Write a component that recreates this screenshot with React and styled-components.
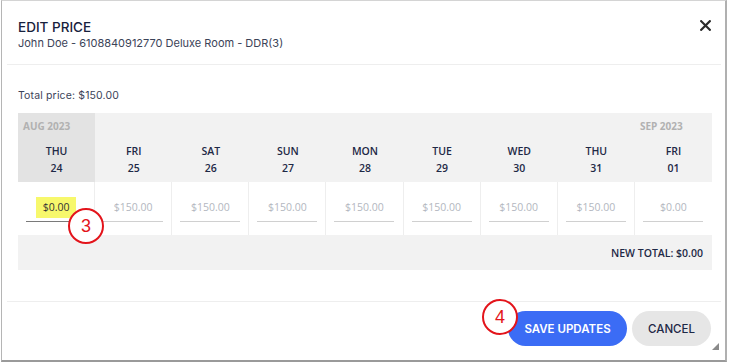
import React from 'react';
import styled, { createGlobalStyle } from 'styled-components';

const GlobalStyle = createGlobalStyle`
    html, body {
        margin: 0;
        padding: 0;
        background: #fff;
    }
    body {
        font-family: "Open Sans", "Liberation Sans", sans-serif;
    }
`;

const days = [
    { month: 'AUG 2023', day: 'THU', num: '24', value: '$0.00', active: true },
    { day: 'FRI', num: '25', value: '$150.00' },
    { day: 'SAT', num: '26', value: '$150.00' },
    { day: 'SUN', num: '27', value: '$150.00' },
    { day: 'MON', num: '28', value: '$150.00' },
    { day: 'TUE', num: '29', value: '$150.00' },
    { day: 'WED', num: '30', value: '$150.00' },
    { day: 'THU', num: '31', value: '$150.00' },
    { month: 'SEP 2023', day: 'FRI', num: '01', value: '$0.00' },
];

const App = () => {
    return (
        <>
            <GlobalStyle />
            <Dialog>
                <Header>
                    <div>
                        <Title>EDIT PRICE</Title>
                        <Subtitle>John Doe - 6108840912770 Deluxe Room - DDR(3)</Subtitle>
                    </div>
                    <CloseBtn aria-label="close">
                        <svg width="11" height="11" viewBox="0 0 11 11">
                            <path d="M1.2 1.2 L9.8 9.8 M9.8 1.2 L1.2 9.8" stroke="#2b2b2b" strokeWidth="2.2" strokeLinecap="square" />
                        </svg>
                    </CloseBtn>
                </Header>
                <Divider />
                <Body>
                    <TotalText>Total price: $150.00</TotalText>
                    <PriceTable>
                        {days.map((d, i) => (
                            <HeadCell key={'h' + i} active={d.active}>
                                <MonthLabel>{d.month || ''}</MonthLabel>
                                <DayLabel>{d.day}</DayLabel>
                                <DayLabel>{d.num}</DayLabel>
                            </HeadCell>
                        ))}
                        {days.map((d, i) => (
                            <ValueCell key={'v' + i} last={i === days.length - 1}>
                                <PriceInput active={d.active}>
                                    {d.active ? <Highlight>{d.value}</Highlight> : d.value}
                                </PriceInput>
                                {d.active && <Marker style={{ left: 50, top: 26 }}>3</Marker>}
                            </ValueCell>
                        ))}
                        <TotalRow>NEW TOTAL: $0.00</TotalRow>
                    </PriceTable>
                </Body>
                <Divider />
                <Footer>
                    <ButtonWrap>
                        <Marker style={{ left: -26, top: -12 }}>4</Marker>
                        <SaveBtn>SAVE UPDATES</SaveBtn>
                    </ButtonWrap>
                    <CancelBtn>CANCEL</CancelBtn>
                    <Grip>
                        <svg width="7" height="7" viewBox="0 0 7 7">
                            <path d="M7 0 L7 7 L0 7 Z" fill="#8a8a8a" />
                        </svg>
                    </Grip>
                </Footer>
            </Dialog>
        </>
    );
};

export default App;

const Dialog = styled.div`
    position: relative;
    box-sizing: border-box;
    width: 726px;
    height: 362px;
    margin-left: 1px;
    background: #fff;
    border: 1px solid #d4d4d4;
    border-left-color: #b5b5b5;
    border-bottom: 2px solid #9a9a9a;
    border-right: 2px solid #b0b0b0;
    display: flex;
    flex-direction: column;
`;

const Header = styled.div`
    height: 63px;
    padding: 17px 14px 0 16px;
    box-sizing: border-box;
    display: flex;
    justify-content: space-between;
    align-items: flex-start;
    font-family: "Inter", "Liberation Sans", sans-serif;
`;

const Title = styled.div`
    font-size: 13.5px;
    line-height: 18px;
    font-weight: 500;
    color: #17213d;
`;

const Subtitle = styled.div`
    font-size: 11px;
    line-height: 14px;
    color: #3b4358;
`;

const CloseBtn = styled.button`
    border: 0;
    background: none;
    padding: 0;
    margin-top: 2px;
    width: 11px;
    height: 11px;
    display: flex;
    cursor: pointer;
`;

const Divider = styled.div`
    height: 1px;
    margin: 0 4px 0 5px;
    background: #eeeeee;
`;

const Body = styled.div`
    padding: 24px 14px 0 16px;
    height: 236px;
    box-sizing: border-box;
    font-family: "Inter", "Liberation Sans", sans-serif;
`;

const TotalText = styled.div`
    font-size: 10.5px;
    line-height: 14px;
    color: #3b4358;
    margin-bottom: 10px;
    letter-spacing: 0.15px;
`;

const PriceTable = styled.div`
    display: grid;
    grid-template-columns: repeat(9, minmax(0, 1fr));
    width: 694px;
    background: #f2f2f2;
    font-family: "Open Sans", "Liberation Sans", sans-serif;
`;

const HeadCell = styled.div`
    height: 69px;
    box-sizing: border-box;
    padding: 6px 0 0;
    background: ${p => (p.active ? '#e3e3e3' : '#f2f2f2')};
    display: flex;
    flex-direction: column;
    align-items: center;
`;

const MonthLabel = styled.div`
    align-self: stretch;
    padding-left: 5px;
    height: 14px;
    line-height: 14px;
    font-size: 10px;
    font-weight: 700;
    color: #b1b1b1;
    margin-bottom: 10px;
    white-space: nowrap;
`;

const DayLabel = styled.div`
    font-size: 10.5px;
    line-height: 17px;
    font-weight: 600;
    color: #1e2946;
`;

const ValueCell = styled.div`
    position: relative;
    height: 53px;
    box-sizing: border-box;
    background: #fff;
    border-right: ${p => (p.last ? '0' : '1px solid #eeeeee')};
    padding: 15px 0 0;
    display: flex;
    justify-content: center;
`;

const PriceInput = styled.div`
    width: 60px;
    height: 25px;
    box-sizing: border-box;
    border-bottom: 1px solid ${p => (p.active ? '#7a7a7a' : '#d0d0d0')};
    display: flex;
    justify-content: center;
    align-items: flex-start;
    font-size: 10.5px;
    line-height: 21px;
    color: ${p => (p.active ? '#333' : '#b3b7c0')};
`;

const Highlight = styled.span`
    background: #f7f86c;
    padding: 0 7px;
    line-height: 21px;
`;

const Marker = styled.div`
    position: absolute;
    width: 32px;
    height: 32px;
    border: 2px solid #e3141b;
    border-radius: 50%;
    background: #fff;
    color: #e3141b;
    font-family: "Liberation Sans", Arial, sans-serif;
    font-size: 18px;
    line-height: 32px;
    text-align: center;
    z-index: 2;
`;

const TotalRow = styled.div`
    grid-column: 1 / -1;
    height: 35px;
    line-height: 36px;
    text-align: right;
    padding-right: 9px;
    font-size: 10.5px;
    font-weight: 600;
    color: #1e2946;
`;

const Footer = styled.div`
    position: relative;
    flex: 1;
    display: flex;
    justify-content: flex-end;
    align-items: flex-start;
    gap: 5px;
    padding: 9px 14px 0 0;
    font-family: "Inter", "Liberation Sans", sans-serif;
`;

const ButtonWrap = styled.div`
    position: relative;
`;

const SaveBtn = styled.button`
    position: relative;
    height: 35px;
    width: 119px;
    border: 0;
    border-radius: 18px;
    background: #3b6cf5;
    color: #fff;
    font-family: inherit;
    font-size: 11.5px;
    font-weight: 600;
    padding: 0;
    cursor: pointer;
`;

const CancelBtn = styled.button`
    height: 35px;
    width: 79px;
    border: 0;
    border-radius: 18px;
    background: #e6e6e6;
    color: #1e2946;
    font-family: inherit;
    font-size: 11.5px;
    font-weight: 500;
    padding: 0;
    cursor: pointer;
`;

const Grip = styled.div`
    position: absolute;
    right: 6px;
    bottom: 10px;
    display: flex;
`;
